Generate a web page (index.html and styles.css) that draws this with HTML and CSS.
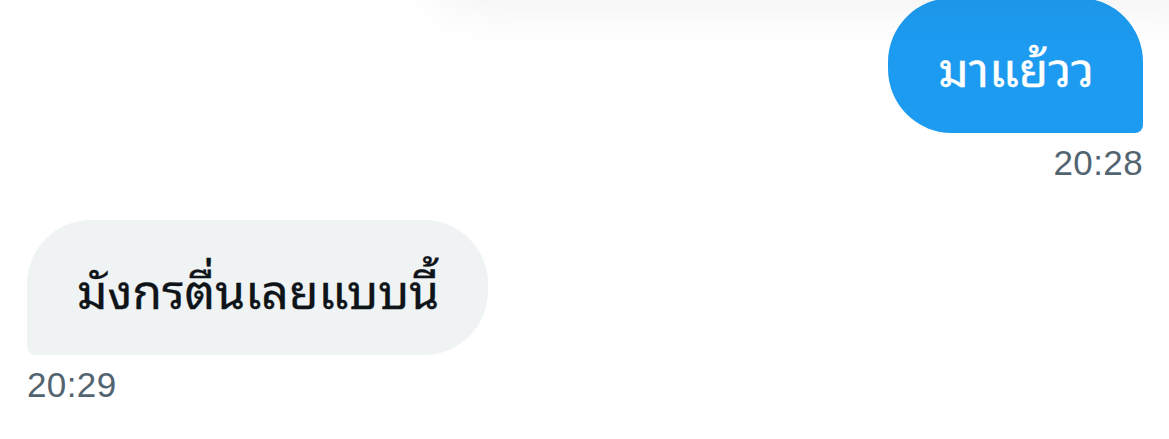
FILE: index.html
```html
<!DOCTYPE html>
<html lang="th">
<head>
<meta charset="utf-8">
<link rel="stylesheet" href="styles.css">
</head>
<body>
<div class="overlay-shadow"></div>
<main class="chat">
  <div class="msg msg-out">
    <div class="bubble bubble-out">มาแย้วว</div>
    <div class="time">20:28</div>
  </div>
  <div class="msg msg-in">
    <div class="bubble bubble-in">มังกรตื่นเลยแบบนี้</div>
    <div class="time">20:29</div>
  </div>
</main>
</body>
</html>
```
FILE: styles.css
```css
html, body {
  margin: 0;
  padding: 0;
  background: #ffffff;
  overflow: hidden;
}
body {
  width: 1169px;
  height: 439px;
  position: relative;
  font-family: "Noto Sans Thai Looped", "Noto Looped Thai", "Garuda", "Loma", "Tlwg Typo", "Noto Sans Thai", "Noto Sans", sans-serif;
}
.overlay-shadow {
  position: absolute;
  top: -120px;
  left: 440px;
  right: -60px;
  height: 120px;
  background: #fff;
  box-shadow: 0 0 60px rgba(0, 0, 0, 0.07);
}
.chat {
  display: flex;
  flex-direction: column;
  padding: 0 26px 0 27px;
}
.msg {
  display: flex;
  flex-direction: column;
}
.msg-out {
  align-items: flex-end;
  margin-top: -2px;
}
.msg-in {
  align-items: flex-start;
  margin-top: 37px;
}
.bubble {
  height: 135px;
  box-sizing: border-box;
  display: flex;
  align-items: center;
  padding: 0 49px 0 50px;
  font-size: 48px;
  font-weight: 400;
  line-height: 1;
  -webkit-text-stroke: 0.3px currentColor;
}
.bubble-out {
  background: #1d9bf0;
  color: #ffffff;
  border-radius: 64px 64px 8px 64px;
}
.bubble-in {
  background: #eff3f4;
  color: #0f1419;
  border-radius: 64px 64px 64px 8px;
}
.time {
  font-family: "Liberation Sans", Arial, sans-serif;
  font-size: 35px;
  letter-spacing: 0.4px;
  line-height: 40px;
  color: #536471;
  margin-top: 10px;
}
```
